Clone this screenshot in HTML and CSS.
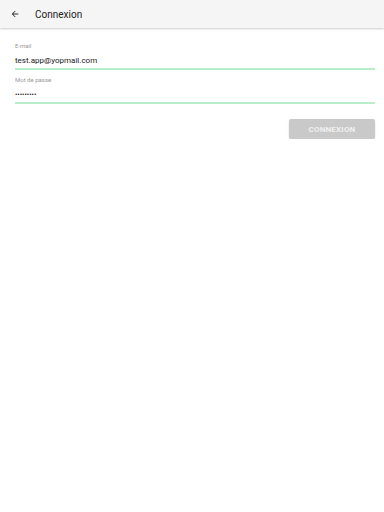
FILE: index.html
```html
<!DOCTYPE html>
<html lang="fr">

<head>
    <meta charset="UTF-8">
    <meta name="viewport" content="width=device-width, initial-scale=1.0">
    <title>Connexion</title>
    <link rel="stylesheet" href="styles.css">
</head>

<body>
    <header class="toolbar">
        <button class="back" type="button" aria-label="Retour">
            <svg width="10" height="10" viewBox="0 0 24 24">
                <path d="M20 11H7.83l5.59-5.59L12 4l-8 8 8 8 1.41-1.41L7.83 13H20v-2z" fill="#333"/>
            </svg>
        </button>
        <h1 class="title">Connexion</h1>
    </header>

    <form class="login-form">
        <div class="field">
            <label for="email">E-mail</label>
            <input type="email" id="email" value="test.app@yopmail.com">
        </div>
        <div class="field">
            <label for="password">Mot de passe</label>
            <input type="password" id="password" value="password1">
        </div>
        <div class="actions">
            <button type="submit" class="submit" disabled>CONNEXION</button>
        </div>
    </form>
</body>

</html>
```

FILE: styles.css
```css
body {
    margin: 0;
    font-family: Roboto, "Liberation Sans", sans-serif;
    background-color: #fff;
    color: #222;
}

.toolbar {
    display: flex;
    align-items: center;
    height: 28px;
    padding: 0 10px;
    background-color: #f5f5f5;
    box-shadow: 0 1px 2px rgba(0, 0, 0, 0.2);
}

.back {
    display: flex;
    padding: 0;
    border: none;
    background: none;
}

.title {
    margin: 0 0 0 15px;
    font-size: 10px;
    font-weight: normal;
    color: #222;
}

.login-form {
    padding: 14px 9px 0 15px;
}

.field {
    display: flex;
    flex-direction: column;
    margin-bottom: 6px;
}

label {
    font-size: 6px;
    color: #999;
    line-height: 8px;
}

input {
    height: 10px;
    margin-top: 6px;
    padding: 0 0 2px 0;
    border: none;
    border-bottom: 2px solid #b9efc8;
    font-family: inherit;
    font-size: 8px;
    line-height: 10px;
    color: #222;
    outline: none;
    box-sizing: content-box;
}

input[type="password"] {
    font-size: 7px;
}

.actions {
    display: flex;
    justify-content: flex-end;
    margin-top: 15px;
}

.submit {
    width: 86px;
    height: 20px;
    padding: 0;
    border: none;
    border-radius: 2px;
    background-color: #c9c9c9;
    color: #f0f0f0;
    font-family: inherit;
    font-size: 8px;
    font-weight: bold;
    letter-spacing: 0.2px;
    box-shadow: 0 1px 2px rgba(0, 0, 0, 0.15);
}
```
